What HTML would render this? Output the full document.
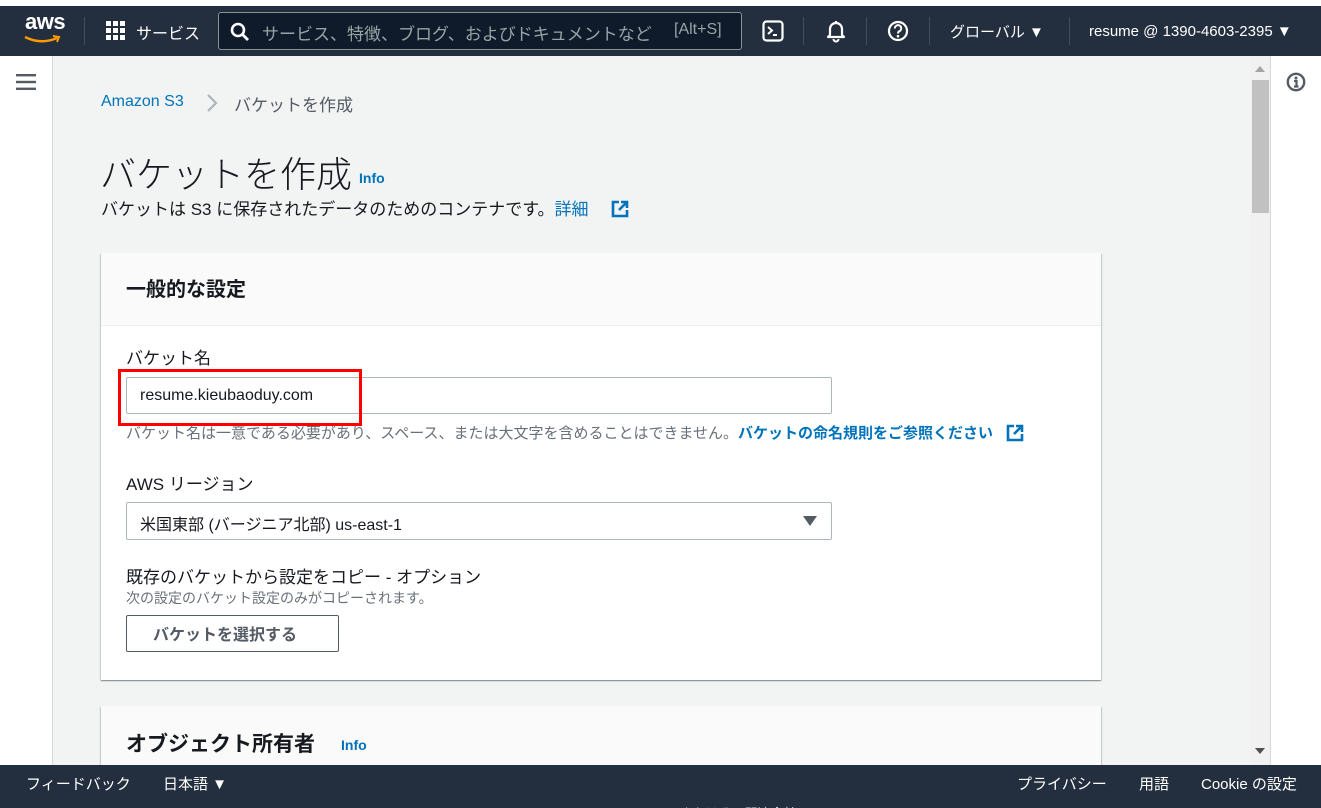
<!DOCTYPE html>
<html style="overflow:hidden;height:808px"><head><meta charset="utf-8"><style>
*{box-sizing:border-box;margin:0;padding:0}
body{width:1321px;height:808px;overflow:hidden;position:relative;background:#fff;font-family:"Liberation Sans","Noto Sans CJK JP",sans-serif;color:#16191f}
.a{position:absolute}
.nav{left:0;top:6px;width:1321px;height:50px;background:#232f3e;color:#fff}
.sep{width:1px;height:28px;background:#414d5c;top:11px}
.t{white-space:nowrap}
.main{left:53px;top:56px;width:1198px;height:709px;background:#f2f3f3;overflow:hidden}
.card{background:#fff;box-shadow:0 1px 1px 0 rgba(0,28,36,.3),1px 1px 1px 0 rgba(0,28,36,.15),-1px 1px 1px 0 rgba(0,28,36,.15)}
.inp{border:1px solid #aab7b8;border-radius:2px;background:#fff}
.foot{left:0;top:765px;width:1321px;height:43px;background:#232f3e;color:#fff;font-size:15px;overflow:hidden}
.blue{color:#0073bb}
</style></head><body>
<div class="a nav">
  <div class="a t" style="left:25px;top:3px;font-size:22px;font-weight:bold;letter-spacing:-0.5px;color:#fff">aws</div>
  <svg class="a" style="left:23px;top:28px" width="40" height="12" viewBox="0 0 40 12"><path d="M2 3 Q18 11 34 4" stroke="#ff9900" stroke-width="2.4" fill="none"/><path d="M30 2 L36 3 L34 8" stroke="#ff9900" stroke-width="2" fill="none"/></svg>
  <div class="a sep" style="left:84px"></div>
  <svg class="a" style="left:106px;top:15px" width="20" height="20" viewBox="0 0 20 20" fill="#fff"><rect x="0" y="0" width="5" height="5"/><rect x="7" y="0" width="5" height="5"/><rect x="14" y="0" width="5" height="5"/><rect x="0" y="7" width="5" height="5"/><rect x="7" y="7" width="5" height="5"/><rect x="14" y="7" width="5" height="5"/><rect x="0" y="14" width="5" height="5"/><rect x="7" y="14" width="5" height="5"/><rect x="14" y="14" width="5" height="5"/></svg>
  <div class="a t" style="left:136px;top:14px;font-size:16px">サービス</div>
  <div class="a" style="left:218px;top:6px;width:524px;height:38px;background:#0f1b2a;border:1px solid #879596;border-radius:3px"></div>
  <svg class="a" style="left:230px;top:16px" width="20" height="20" viewBox="0 0 20 20"><circle cx="8" cy="8" r="6" stroke="#fff" stroke-width="2.6" fill="none"/><path d="M12.5 12.5 L18 18" stroke="#fff" stroke-width="2.8"/></svg>
  <div class="a t" style="left:262px;top:14px;font-size:17px;color:#95a5a6;width:398px;overflow:hidden">サービス、特徴、ブログ、およびドキュメントなど</div>
  <div class="a t" style="left:674px;top:15px;font-size:16px;color:#95a5a6">[Alt+S]</div>
  <svg class="a" style="left:762px;top:14px" width="22" height="22" viewBox="0 0 22 22"><rect x="1.5" y="1.5" width="19" height="19" rx="3" stroke="#fff" stroke-width="2.2" fill="none"/><path d="M6 7 L10 10.5 L6 14" stroke="#fff" stroke-width="2" fill="none"/><path d="M11 15 H15" stroke="#fff" stroke-width="2"/></svg>
  <div class="a sep" style="left:803px"></div>
  <svg class="a" style="left:825px;top:13px" width="22" height="24" viewBox="0 0 22 24"><path d="M11 2 V4 M5 16 V10 a6 6 0 0 1 12 0 V16 L19 18 H3 Z" stroke="#fff" stroke-width="2.2" fill="none" stroke-linejoin="round"/><path d="M8.5 20 a2.5 2.5 0 0 0 5 0" stroke="#fff" stroke-width="2" fill="none"/></svg>
  <div class="a sep" style="left:866px"></div>
  <svg class="a" style="left:887px;top:14px" width="22" height="22" viewBox="0 0 22 22"><circle cx="11" cy="11" r="9" stroke="#fff" stroke-width="2.2" fill="none"/><path d="M7.8 8.5 a3.2 3.2 0 1 1 4.5 2.8 c-1 .5-1.3 1-1.3 2.2" stroke="#fff" stroke-width="2" fill="none"/><circle cx="11" cy="16.2" r="1.3" fill="#fff"/></svg>
  <div class="a sep" style="left:929px"></div>
  <div class="a t" style="left:950px;top:15px;font-size:15px">グローバル ▼</div>
  <div class="a sep" style="left:1069px"></div>
  <div class="a t" style="left:1089px;top:17px;font-size:15px">resume @ 1390-4603-2395 ▼</div>
</div>

<div class="a" style="left:52px;top:56px;width:1px;height:709px;background:#d5dbdb"></div>
<svg class="a" style="left:16px;top:74px" width="20" height="16" viewBox="0 0 20 16" fill="#545b64"><rect y="0" width="20" height="2.4"/><rect y="6.8" width="20" height="2.4"/><rect y="13.6" width="20" height="2.4"/></svg>

<div class="a main">
  <div class="a t" style="left:48px;top:37px;font-size:16px;color:#0073bb">Amazon S3</div>
  <svg class="a" style="left:153px;top:38px" width="12" height="18" viewBox="0 0 12 18"><path d="M2 1 L10 9 L2 17" stroke="#aab7b8" stroke-width="2.2" fill="none"/></svg>
  <div class="a t" style="left:181px;top:35px;font-size:17px;color:#545b64">バケットを作成</div>
  <div class="a t" style="left:47px;top:90px;font-size:36px;color:#16191f;font-weight:300">バケットを作成</div>
  <div class="a t" style="left:306px;top:114px;font-size:14px;font-weight:bold;color:#0073bb">Info</div>
  <div class="a t" style="left:48px;top:139px;font-size:17px;color:#16191f">バケットは S3 に保存されたデータのためのコンテナです。<span class="blue">詳細</span></div>
  <svg class="a" style="left:557px;top:143px" width="20" height="20" viewBox="0 0 20 20"><path d="M9 3 H3 V17 H17 V11" stroke="#0073bb" stroke-width="2.6" fill="none"/><path d="M11 3 H17 V9 M17 3 L9 11" stroke="#0073bb" stroke-width="2.6" fill="none"/></svg>

  <div class="a card" style="left:48px;top:197px;width:1000px;height:427px">
    <div class="a" style="left:0;top:0;width:1000px;height:73px;background:#fafafa;border-bottom:1px solid #eaeded"></div>
    <div class="a t" style="left:25px;top:20px;font-size:20px;font-weight:bold">一般的な設定</div>
    <div class="a t" style="left:25px;top:91px;font-size:17px">バケット名</div>
    <div class="a inp" style="left:25px;top:124px;width:706px;height:37px"></div>
    <div class="a t" style="left:39px;top:134px;font-size:16px">resume.kieubaoduy.com</div>
    <div class="a" style="left:17px;top:116px;width:244px;height:57px;border:3px solid #ff0000"></div>
    <div class="a t" style="left:25px;top:169px;font-size:15px;color:#687078">バケット名は一意である必要があり、スペース、または大文字を含めることはできません。<b class="blue">バケットの命名規則をご参照ください</b></div>
    <svg class="a" style="left:904px;top:170px" width="20" height="20" viewBox="0 0 20 20"><path d="M9 3 H3 V17 H17 V11" stroke="#0073bb" stroke-width="2.6" fill="none"/><path d="M11 3 H17 V9 M17 3 L9 11" stroke="#0073bb" stroke-width="2.6" fill="none"/></svg>
    <div class="a t" style="left:25px;top:217px;font-size:17px">AWS リージョン</div>
    <div class="a inp" style="left:25px;top:249px;width:706px;height:38px"></div>
    <div class="a t" style="left:39px;top:258px;font-size:16px">米国東部 (バージニア北部) us-east-1</div>
    <svg class="a" style="left:702px;top:262px" width="14" height="12" viewBox="0 0 14 12"><path d="M0 1 H14 L7 11 Z" fill="#545b64"/></svg>
    <div class="a t" style="left:25px;top:310px;font-size:17px">既存のバケットから設定をコピー - オプション</div>
    <div class="a t" style="left:25px;top:335px;font-size:14px;color:#687078">次の設定のバケット設定のみがコピーされます。</div>
    <div class="a" style="left:25px;top:362px;width:213px;height:37px;border:1px solid #545b64;border-radius:2px;background:#fff"></div>
    <div class="a t" style="left:52px;top:368px;font-size:16px;font-weight:bold;color:#545b64">バケットを選択する</div>
  </div>

  <div class="a card" style="left:48px;top:650px;width:1000px;height:120px;background:#fafafa">
    <div class="a t" style="left:25px;top:22px;font-size:21px;font-weight:bold">オブジェクト所有者</div>
    <div class="a t" style="left:240px;top:31px;font-size:14px;font-weight:bold;color:#0073bb">Info</div>
  </div>
</div>

<div class="a" style="left:1251px;top:56px;width:19px;height:709px;background:#f1f1f1"></div>
<svg class="a" style="left:1255px;top:66px" width="10" height="6" viewBox="0 0 10 6"><path d="M0 6 L5 0 L10 6 Z" fill="#a3a3a3"/></svg>
<div class="a" style="left:1252px;top:80px;width:17px;height:133px;background:#c1c1c1"></div>
<svg class="a" style="left:1255px;top:748px" width="10" height="6" viewBox="0 0 10 6"><path d="M0 0 L5 6 L10 0 Z" fill="#505050"/></svg>
<div class="a" style="left:1270px;top:56px;width:1px;height:709px;background:#d5dbdb"></div>
<svg class="a" style="left:1286px;top:72px" width="20" height="20" viewBox="0 0 20 20"><circle cx="10" cy="10" r="8.2" stroke="#545b64" stroke-width="2.4" fill="none"/><circle cx="10" cy="6" r="1.5" fill="#545b64"/><path d="M8 9 H10.5 V14 M8 14.5 H12.5" stroke="#545b64" stroke-width="2.2" fill="none"/></svg>

<div class="a foot">
  <div class="a t" style="left:26px;top:8px">フィードバック</div>
  <div class="a t" style="left:163px;top:8px">日本語 ▼</div>
  <div class="a t" style="left:1017px;top:8px">プライバシー</div>
  <div class="a t" style="left:1139px;top:8px">用語</div>
  <div class="a t" style="left:1201px;top:8px">Cookie の設定</div>
  <div class="a t" style="left:468px;top:38px;font-size:13px;color:#d5dbdb">© 2022, Amazon Web Services, Inc. またはその関連会社。</div>
</div>
</body></html>
